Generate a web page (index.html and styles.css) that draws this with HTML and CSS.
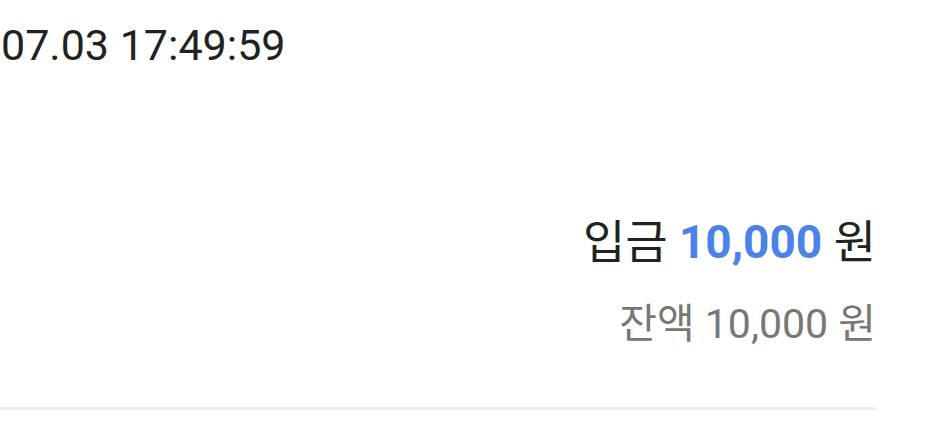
FILE: index.html
```html
<!DOCTYPE html>
<html lang="ko">
<head>
<meta charset="utf-8">
<link rel="stylesheet" href="styles.css">
</head>
<body>
<div class="item">
  <div class="time">07.03 17:49:59</div>
  <div class="amounts">
    <div class="deposit"><span class="label">입금</span> <span class="value">10,000</span> <span class="unit">원</span></div>
    <div class="balance"><span class="label">잔액</span> <span class="value">10,000</span> <span class="unit">원</span></div>
  </div>
  <div class="divider"></div>
</div>
</body>
</html>
```

FILE: styles.css
```css
html, body {
  margin: 0;
  padding: 0;
  background: #ffffff;
}
body {
  font-family: Roboto, "Noto Sans CJK KR", sans-serif;
}
.item {
  width: 876px;
  padding-top: 20px;
  display: flex;
  flex-direction: column;
}
.time {
  font-size: 43px;
  line-height: 50px;
  color: #222222;
  padding-left: 1px;
}
.amounts {
  margin-top: 144px;
  display: flex;
  flex-direction: column;
  align-items: flex-end;
}
.deposit {
  font-size: 46px;
  line-height: 56px;
  color: #222222;
}
.deposit .value {
  color: #4a82e8;
  font-weight: 700;
}
.balance {
  margin-top: 30px;
  font-size: 41px;
  line-height: 48px;
  color: #777777;
}
.divider {
  margin-top: 59px;
  height: 3px;
  background: #ececec;
}
```
